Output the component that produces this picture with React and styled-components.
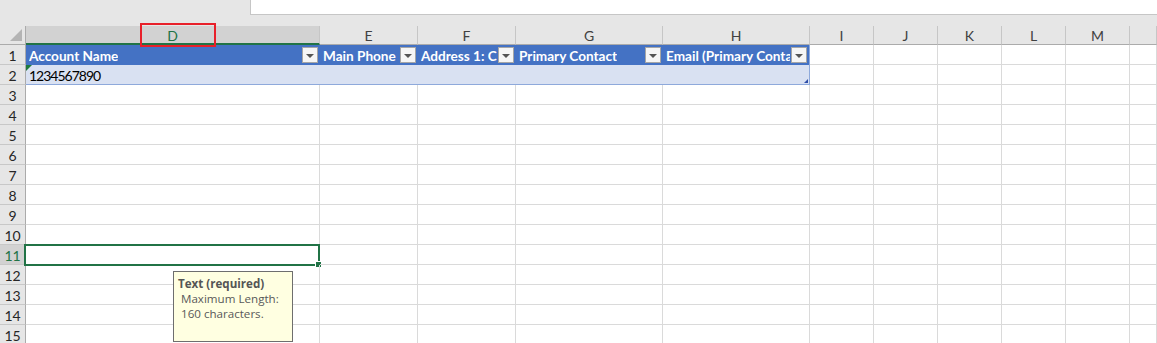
import React from "react";
import styled, { createGlobalStyle, css } from "styled-components";

const Global = createGlobalStyle`
  html, body { margin: 0; padding: 0; background: #ffffff; }
  body { font-family: Lato, "Noto Sans", sans-serif; overflow: hidden; }
`;

const Page = styled.div`
  position: relative;
  width: 1157px;
  height: 343px;
  overflow: hidden;
  background: #ffffff;
`;

const TopBar = styled.div`
  height: 26px;
  background: #e6e6e6;
  display: flex;
  align-items: flex-start;
`;

const FormulaBox = styled.div`
  margin-left: 250px;
  flex: 1;
  height: 15px;
  background: #ffffff;
  border-left: 1px solid #c6c6c6;
  border-bottom: 1px solid #c6c6c6;
  box-sizing: border-box;
`;

const Sheet = styled.div`
  display: grid;
  grid-template-columns: 26px 294px 98px 98px 147px 147px repeat(5, 64px) 1fr;
  grid-template-rows: 19px;
  grid-auto-rows: 20px;
`;

const Corner = styled.div`
  background: #e6e6e6;
  border-right: 1px solid #ababab;
  border-bottom: 1px solid #ababab;
  box-sizing: border-box;
  display: flex;
  justify-content: flex-end;
  align-items: flex-end;
  padding: 0 3px 3px 0;
`;

const CornerTriangle = styled.div`
  width: 0;
  height: 0;
  border-left: 12px solid transparent;
  border-bottom: 12px solid #b4b4b4;
`;

const ColHead = styled.div`
  background: ${(p) => (p.$active ? "#d2d2d2" : "#e6e6e6")};
  color: ${(p) => (p.$active ? "#217346" : "#404040")};
  border-right: 1px solid #c6c6c6;
  border-bottom: ${(p) => (p.$active ? "2px solid #217346" : "1px solid #ababab")};
  box-sizing: border-box;
  font-size: 14px;
  display: flex;
  align-items: center;
  justify-content: center;
  padding-top: ${(p) => (p.$active ? "2px" : "1px")};
`;

const RowHead = styled.div`
  background: ${(p) => (p.$active ? "#d2d2d2" : "#e6e6e6")};
  color: ${(p) => (p.$active ? "#217346" : "#262626")};
  border-right: 1px solid #ababab;
  border-bottom: 1px solid #c8c8c8;
  box-sizing: border-box;
  font-size: 14px;
  display: flex;
  align-items: center;
  justify-content: center;
  padding-top: 2px;
`;

const Cell = styled.div`
  position: relative;
  box-sizing: border-box;
  border-right: 1px solid #dadada;
  border-bottom: 1px solid #dadada;
  font-size: 14px;
  color: #000;
  display: flex;
  align-items: center;
  padding-left: 3px;
  padding-top: 2px;
  white-space: nowrap;
  overflow: visible;
  ${(p) =>
    p.$kind === "th" &&
    css`
      background: #4472c4;
      color: #ffffff;
      font-weight: 700;
      font-size: 13.6px;
      border-right: ${p.$last ? "1px solid #8ea9db" : "none"};
      border-bottom: none;
      padding-right: 19px;
      overflow: hidden;
    `}
  ${(p) =>
    p.$kind === "td" &&
    css`
      background: #d9e1f2;
      border-right: ${p.$last ? "1px solid #8ea9db" : "none"};
      border-bottom: 1px solid #8ea9db;
    `}
`;

const HeadText = styled.span`
  overflow: hidden;
  display: block;
`;

const Digits = styled.span`
  letter-spacing: -1px;
`;

const FilterButton = styled.div`
  position: absolute;
  right: 2px;
  top: 2px;
  width: 16px;
  height: 16px;
  box-sizing: border-box;
  background: #f6f6f6;
  border: 1px solid #a6a6a6;
  display: flex;
  align-items: center;
  justify-content: center;
`;

const DownTriangle = styled.div`
  width: 0;
  height: 0;
  border-left: 4px solid transparent;
  border-right: 4px solid transparent;
  border-top: 4px solid #555555;
  margin-top: 1px;
`;

const ErrorMark = styled.div`
  position: absolute;
  left: 0;
  top: 0;
  width: 0;
  height: 0;
  border-top: 6px solid #1e7a3c;
  border-right: 6px solid transparent;
`;

const ResizeMark = styled.div`
  position: absolute;
  right: 1px;
  bottom: 1px;
  width: 0;
  height: 0;
  border-bottom: 4px solid #2f4ea8;
  border-left: 4px solid transparent;
`;

const Selection = styled.div`
  position: absolute;
  left: -2px;
  top: -1px;
  right: -1px;
  bottom: -2px;
  border: 2px solid #217346;
  pointer-events: none;
`;

const FillHandle = styled.div`
  position: absolute;
  right: -4px;
  bottom: -4px;
  width: 5px;
  height: 5px;
  background: #217346;
  border: 1px solid #ffffff;
`;

const Annotation = styled.div`
  position: absolute;
  left: 140px;
  top: 23px;
  width: 76px;
  height: 24px;
  box-sizing: border-box;
  border: 2px solid #e8202a;
  pointer-events: none;
`;

const Tooltip = styled.div`
  position: absolute;
  left: 173px;
  top: 271px;
  width: 120px;
  height: 71px;
  box-sizing: border-box;
  background: #ffffe1;
  border: 1px solid #6e6e6e;
  padding: 4px 4px 0 4px;
  font-family: "Open Sans", "Noto Sans", sans-serif;
  font-size: 11.6px;
  line-height: 15px;
  color: #595959;
`;

const TipTitle = styled.div`
  font-weight: 700;
  color: #555555;
`;

const TipLine = styled.div`
  padding-left: 3px;
`;

const columns = ["D", "E", "F", "G", "H", "I", "J", "K", "L", "M", "N"];
const tableHeaders = {
  D: "Account Name",
  E: "Main Phone",
  F: "Address 1: City",
  G: "Primary Contact",
  H: "Email (Primary Contact)",
};
const tableCols = ["D", "E", "F", "G", "H"];

export default function App() {
  const rows = Array.from({ length: 15 }, (_, i) => i + 1);
  return (
    <Page>
      <Global />
      <TopBar>
        <FormulaBox />
      </TopBar>
      <Sheet>
        <Corner>
          <CornerTriangle />
        </Corner>
        {columns.map((c) => (
          <ColHead key={c} $active={c === "D"}>
            {c === "N" ? "" : c}
          </ColHead>
        ))}
        {rows.map((r) => (
          <React.Fragment key={r}>
            <RowHead $active={r === 11}>{r}</RowHead>
            {columns.map((c) => {
              const inTable = tableCols.includes(c);
              const last = c === "H";
              if (r === 1 && inTable) {
                return (
                  <Cell key={c} $kind="th" $last={last}>
                    <HeadText>{tableHeaders[c]}</HeadText>
                    <FilterButton>
                      <DownTriangle />
                    </FilterButton>
                  </Cell>
                );
              }
              if (r === 2 && inTable) {
                return (
                  <Cell key={c} $kind="td" $last={last}>
                    {c === "D" && (
                      <>
                        <ErrorMark />
                        <Digits>1234567890</Digits>
                      </>
                    )}
                    {last && <ResizeMark />}
                  </Cell>
                );
              }
              return (
                <Cell key={c}>
                  {r === 11 && c === "D" && (
                    <Selection>
                      <FillHandle />
                    </Selection>
                  )}
                </Cell>
              );
            })}
          </React.Fragment>
        ))}
      </Sheet>
      <Annotation />
      <Tooltip>
        <TipTitle>Text (required)</TipTitle>
        <TipLine>Maximum Length:</TipLine>
        <TipLine>160 characters.</TipLine>
      </Tooltip>
    </Page>
  );
}
